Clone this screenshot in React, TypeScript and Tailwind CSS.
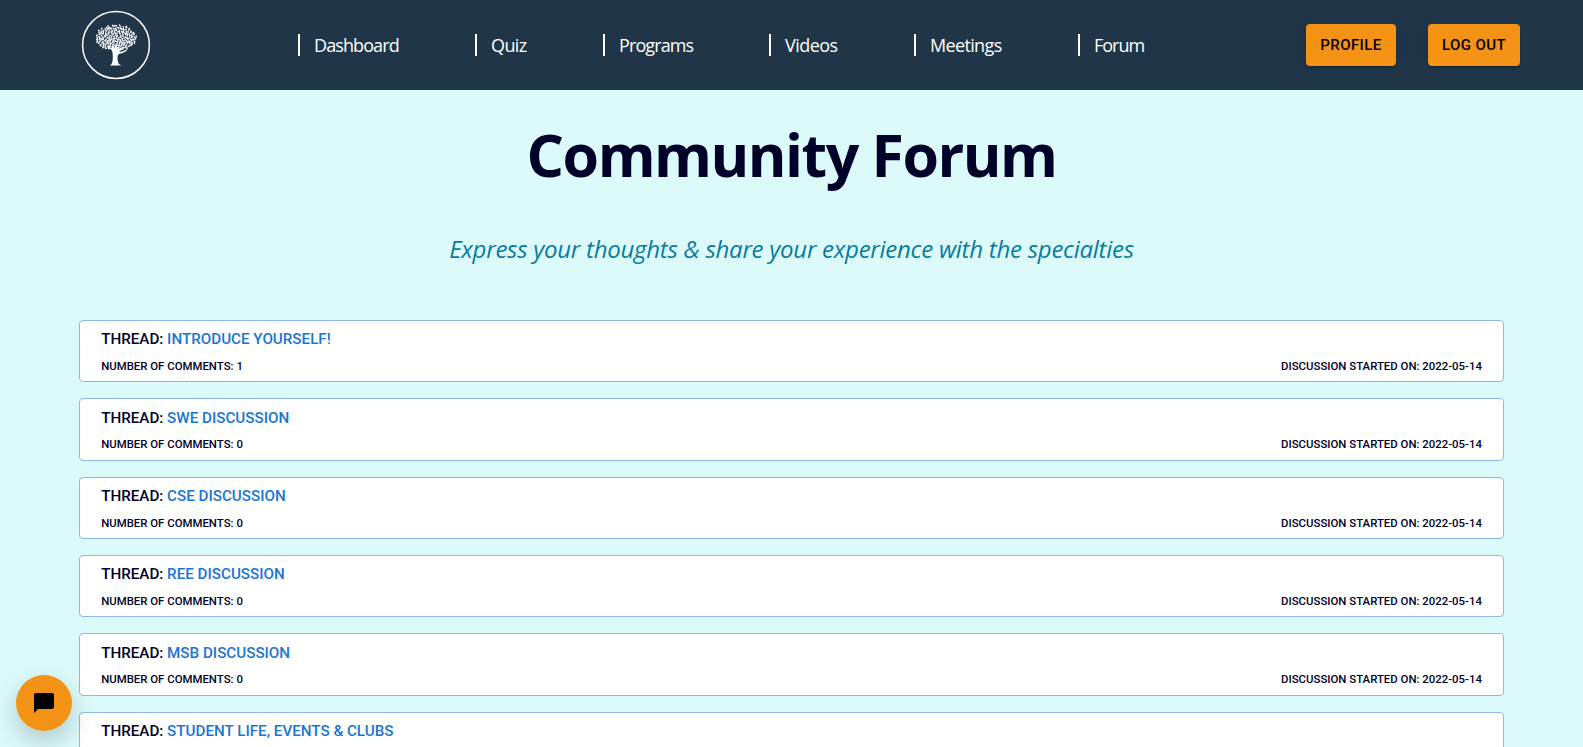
import React from "react";

const navItems = [
  { label: "Dashboard", box: "w-[177px]", text: "tracking-[-0.9px]" },
  { label: "Quiz", box: "w-[128px]", text: "tracking-[-0.6px]" },
  { label: "Programs", box: "w-[166px]", text: "tracking-[-0.9px]" },
  { label: "Videos", box: "w-[145px]", text: "tracking-[-0.55px]" },
  { label: "Meetings", box: "w-[164px]", text: "tracking-[-0.65px]" },
  { label: "Forum", box: "w-[80px]", text: "tracking-[-1px]" },
];

const threads: { title: string; comments?: number }[] = [
  { title: "Introduce Yourself!", comments: 1 },
  { title: "SWE Discussion", comments: 0 },
  { title: "CSE Discussion", comments: 0 },
  { title: "REE Discussion", comments: 0 },
  { title: "MSB Discussion", comments: 0 },
  { title: "Student Life, Events & Clubs" },
];

const noise = (n: number) => {
  const s = Math.sin(n * 127.1) * 43758.5453;
  return s - Math.floor(s);
};

// Leaves sit on a jittered spiral, squeezed into the crown's oval.
const leaves = Array.from({ length: 215 }, (_, i) => {
  const r = Math.sqrt((i + 0.5) / 215);
  const a = i * 2.39996;
  const dy = Math.sin(a) * r;
  const x = 35 + Math.cos(a) * r * 20.5 + (noise(i) - 0.5) * 1.2;
  const y = 28.500 + dy * (dy > 0 ? 11.5 : 13.5) + (noise(i + 500) - 0.5) * 1.2;
  return { x, y, turn: noise(i + 900) * 180 };
});

function TreeLogo() {
  return (
    <svg className="h-[70px] w-[70px]" viewBox="0 0 70 70" fill="#fff">
      <circle cx="35" cy="35" r="33.4" fill="none" stroke="#fff" strokeWidth="1.5" />
      {leaves.map((l, i) => (
        <ellipse
          key={i}
          cx={l.x}
          cy={l.y}
          rx="1.15"
          ry="0.75"
          transform={`rotate(${l.turn} ${l.x} ${l.y})`}
        />
      ))}
      <path d="M28.800 55.500C31 54.500 31.600 52 31.800 48C31.900 44 31.500 41.500 30.500 40C29 38 27 37.500 24.500 36.500C28 36.500 30 37.500 31.500 38.700L30.500 33L33.500 38.500L35.500 33L35.500 39.500L39 34.500L37.500 40L43 36.500C41.500 39 39.500 40.500 38 42.200C42 41.500 45 40.500 47 38C46 41.500 42.500 43 38.500 43.800C36.800 44.500 36.400 46 36.500 48.500C36.700 52 37.500 54.500 40.200 55.500Z" />
    </svg>
  );
}

const actionClass =
  "flex h-[42px] items-center justify-center rounded-[4px] bg-[#f39214] font-['Roboto',sans-serif] text-[15px] font-medium uppercase tracking-[0.43px] text-black shadow-[0_3px_1px_-2px_rgba(0,0,0,0.2),0_2px_2px_0_rgba(0,0,0,0.14),0_1px_5px_0_rgba(0,0,0,0.12)]";

export default function App() {
  return (
    <div className="h-[747px] overflow-hidden bg-[#dcfafa] font-['Open_Sans',sans-serif] text-[#010029]">
      <header className="flex h-[90px] items-center bg-[#213549]">
        <div className="w-[298px] pl-[81px]">
          <TreeLogo />
        </div>
        <nav className="flex flex-1">
          {navItems.map((item) => (
            <div key={item.label} className={item.box}>
              <a
                className={`block h-[22px] border-l-2 border-white pl-[14px] text-[18px] leading-[23px] whitespace-nowrap text-white ${item.text}`}
              >
                {item.label}
              </a>
            </div>
          ))}
        </nav>
        <div className="flex gap-8 pr-[63px]">
          <button className={`w-[90px] ${actionClass}`}>Profile</button>
          <button className={`w-[92px] ${actionClass}`}>Log out</button>
        </div>
      </header>

      <main>
        <h1 className="pt-[24px] text-center text-[59px] leading-[80px] font-bold tracking-[-1.5px]">
          Community Forum
        </h1>
        <p className="pt-[37px] text-center text-[24px] leading-[36px] tracking-[-0.26px] text-[#067d9f] italic">
          Express your thoughts &amp; share your experience with the specialties
        </p>
        <section className="mx-[5%] mt-[53px] flex flex-col gap-4 font-['Roboto',sans-serif] font-medium uppercase">
          {threads.map((t) => (
            <article
              key={t.title}
              className="h-[62.350px] rounded-[4px] border border-[#8cb9e8] bg-white px-[21px] pt-[5.200px]"
            >
              <h2 className="text-[15.200px] leading-[27px]">
                Thread: <a className="text-[#1976d2]">{t.title}</a>
              </h2>
              {t.comments !== undefined && (
                <div className="-mt-[0.300px] flex justify-between text-[11.400px] leading-[27px]">
                  <span>Number of comments: {t.comments}</span>
                  <span>Discussion started on: 2022-05-14</span>
                </div>
              )}
            </article>
          ))}
        </section>
      </main>

      <button className="fixed bottom-4 left-4 flex size-14 items-center justify-center rounded-full bg-[#f39214] shadow-[0_10px_24px_rgba(0,0,0,0.2)]">
        <svg className="size-6" viewBox="0 0 24 24" fill="#000">
          <path d="M20 2H4c-1.100 0-2 .9-2 2v18l4-4h14c1.100 0 2-.9 2-2V4c0-1.100-.9-2-2-2z" />
        </svg>
      </button>
    </div>
  );
}
